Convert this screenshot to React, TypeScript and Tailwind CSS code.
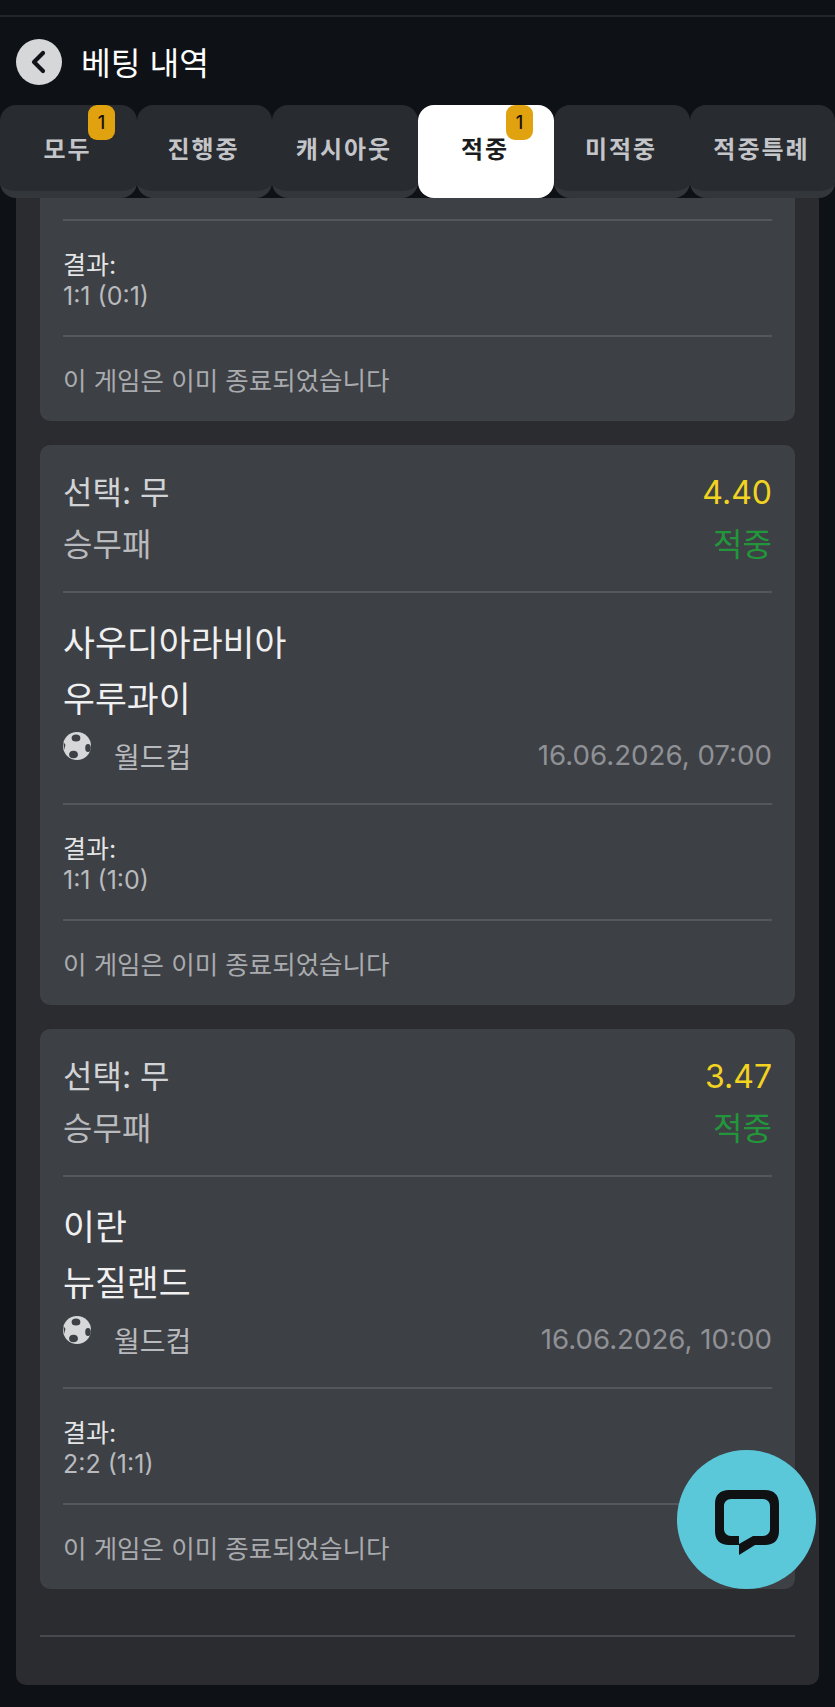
const font = { fontFamily: '"Inter", "Noto Sans CJK KR", sans-serif' };

const tabs = [
  { label: "모두", w: "w-[137px]", badge: true },
  { label: "진행중", w: "w-[135px]" },
  { label: "캐시아웃", w: "w-[146px]" },
  { label: "적중", w: "w-[136px]", active: true, badge: true },
  { label: "미적중", w: "w-[136px]" },
  { label: "적중특례", w: "w-[145px]" },
];

function Ball() {
  return (
    <svg width="28" height="28" viewBox="0 0 28 28" className="shrink-0">
      <circle cx="14" cy="14" r="14" fill="#d6d7d9" />
      <ellipse cx="13" cy="6" rx="4.4" ry="3.6" fill="#3d4045" />
      <ellipse cx="25" cy="16" rx="2.8" ry="4" fill="#3d4045" />
      <ellipse cx="10.5" cy="22.5" rx="4.4" ry="3.8" fill="#3d4045" />
      <path d="M0.5 10 L2.5 13 L1 18 Z" fill="#3d4045" />
    </svg>
  );
}

function Result({ score }: { score: string }) {
  return (
    <>
      <div className="pt-[29px] pb-[23px] border-b-2 border-[#54575b]">
        <div className="text-[25px] leading-[31px] text-[#e4e5e6]">결과:</div>
        <div className="text-[25px] leading-[31px] text-[#b9babd]">{score}</div>
      </div>
      <div className="text-[25.5px] leading-[34px] text-[#a9abae] pt-[27px] pb-[23px]">이 게임은 이미 종료되었습니다</div>
    </>
  );
}

function Card({ odds, home, away, date, score }: { odds: string; home: string; away: string; date: string; score: string }) {
  return (
    <div className="bg-[#3d4045] rounded-[10px] px-[23px]">
      <div className="pt-[27px] pb-[25px] border-b-2 border-[#54575b]">
        <div className="flex justify-between items-center h-[42px]">
          <span className="text-[32px] text-[#d2d3d5]">선택: 무</span>
          <span className="text-[32px] text-[#f2d31f]">{odds}</span>
        </div>
        <div className="flex justify-between items-center h-[42px] mt-[10px]">
          <span className="text-[32px] text-[#b9babd]">승무패</span>
          <span className="text-[32px] text-[#22963a]">적중</span>
        </div>
      </div>
      <div className="pt-[22px] pb-[25px] border-b-2 border-[#54575b]">
        <div className="text-[34.7px] leading-[56px] text-[#f0f0f1]">{home}</div>
        <div className="text-[34.7px] leading-[56px] text-[#f0f0f1]">{away}</div>
        <div className="flex justify-between items-center mt-[7px] h-[44px]">
          <div className="flex items-start">
            <div className="-mt-[4px]"><Ball /></div>
            <span className="text-[28px] leading-[38px] text-[#b9babd] ml-[23px] mt-[3px]">월드컵</span>
          </div>
          <span className="text-[27.7px] text-[#8f9195]">{date}</span>
        </div>
      </div>
      <Result score={score} />
    </div>
  );
}

export default function App() {
  return (
    <div style={font} className="relative w-[835px] h-[1707px] bg-[#0e1116] overflow-hidden">
      <div className="h-[15px]" />
      <div className="h-[2px] bg-[#22252a]" />
      <div className="flex items-center pl-[16px] pt-[2px] h-[88px]">
        <div className="w-[46px] h-[46px] rounded-full bg-[#d6d7d9] flex items-center justify-center">
          <svg width="46" height="46" viewBox="0 0 46 46" fill="none">
            <path d="M27 14 L18 23 L27 32" stroke="#111418" strokeWidth="4.2" strokeLinecap="round" strokeLinejoin="round" />
          </svg>
        </div>
        <div className="ml-[19px] mt-[3px] text-[32.3px] text-white leading-[46px]">베팅 내역</div>
      </div>
      <div className="flex h-[93px]">
        {tabs.map((t) => (
          <div
            key={t.label}
            className={
              t.active
                ? `relative ${t.w} h-[93px] rounded-[16px] bg-white flex items-center justify-center pb-[3px] pr-[2px]`
                : `relative ${t.w} h-[93px] rounded-[16px] bg-[#282b30] border-b-[7px] border-[#33363b] flex items-center justify-center pt-[4px] pr-[2px]`
            }
          >
            <span className={t.active ? "text-[24px] font-bold tracking-[2px] text-[#1a1c20]" : "text-[24px] font-bold tracking-[2px] text-[#c4c5c8]"}>
              {t.label}
            </span>
            {t.badge && (
              <div className="absolute top-0 left-[88px] w-[27px] h-[35px] rounded-[9px] bg-[#e0a30f] flex items-center justify-center text-[18px] font-medium text-[#1a1208]">
                1
              </div>
            )}
          </div>
        ))}
      </div>
      <div className="mx-[16px] bg-[#2a2c30] rounded-b-[10px] h-[1487px] px-[24px]">
        <div className="bg-[#3d4045] rounded-b-[10px] px-[23px]">
          <div className="h-[21px] border-b-2 border-[#54575b] box-content" />
          <Result score="1:1 (0:1)" />
        </div>
        <div className="flex flex-col gap-[24px] mt-[24px]">
          <Card odds="4.40" home="사우디아라비아" away="우루과이" date="16.06.2026, 07:00" score="1:1 (1:0)" />
          <Card odds="3.47" home="이란" away="뉴질랜드" date="16.06.2026, 10:00" score="2:2 (1:1)" />
        </div>
        <div className="mt-[46px] h-[2px] bg-[#46494d]" />
      </div>
      <div className="absolute left-[677px] top-[1450px] w-[139px] h-[139px] rounded-full bg-[#5bc8da] flex items-center justify-center">
        <svg width="64" height="65" viewBox="0 0 64 65" className="mt-[6px]">
          <path
            fillRule="evenodd"
            fill="#0f1113"
            d="M14 0 H50 C59 0 64 5 64 14 V41 C64 50 59 55 50 55 H40 L24 65 V46 H16 C12 46 9 43 9 39 V16 C9 12 12 9 16 9 H48 C52 9 55 12 55 16 V39 C55 43 52 46 48 46 H38 L24 54 V55 H14 C5 55 0 50 0 41 V14 C0 5 5 0 14 0 Z"
          />
        </svg>
      </div>
    </div>
  );
}
